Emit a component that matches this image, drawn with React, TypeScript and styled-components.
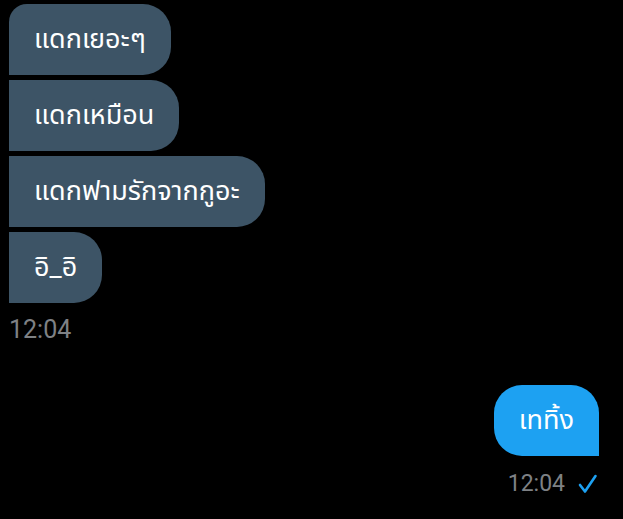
import React from "react";
import styled, { createGlobalStyle } from "styled-components";

const Global = createGlobalStyle`
  html, body { margin: 0; padding: 0; background: #000; }
  body { font-family: Roboto, "Noto Sans Thai", "Noto Sans", sans-serif; }
`;

const Page = styled.div`
  width: 623px;
  height: 519px;
  background: #000;
  box-sizing: border-box;
  padding: 4px 24px 0 9px;
  display: flex;
  flex-direction: column;
  overflow: hidden;
`;

const Group = styled.div<{ $side: "left" | "right" }>`
  display: flex;
  flex-direction: column;
  align-items: ${(p) => (p.$side === "left" ? "flex-start" : "flex-end")};
  gap: 5px;
`;

const Bubble = styled.div<{ $tl?: number; $tr?: number; $br?: number; $bl?: number; $mine?: boolean }>`
  height: 71px;
  box-sizing: border-box;
  display: flex;
  align-items: center;
  padding: 0 25px;
  font-size: 27px;
  color: #fff;
  background: ${(p) => (p.$mine ? "#1da1f2" : "#3d5466")};
  border-radius: ${(p) => `${p.$tl ?? 0}px ${p.$tr ?? 28}px ${p.$br ?? 28}px ${p.$bl ?? 0}px`};
  white-space: nowrap;
`;

const Meta = styled.div<{ $side: "left" | "right" }>`
  display: flex;
  align-items: center;
  gap: 11px;
  align-self: ${(p) => (p.$side === "left" ? "flex-start" : "flex-end")};
  margin-top: ${(p) => (p.$side === "left" ? "13px" : "14px")};
  margin-right: ${(p) => (p.$side === "left" ? "0" : "1px")};
  font-family: Roboto, sans-serif;
  font-size: ${(p) => (p.$side === "left" ? "25px" : "23px")};
  line-height: 28px;
  color: #7e8185;
`;

const Spacer = styled.div`
  height: 41px;
`;

const Check = () => (
  <svg width="22" height="22" viewBox="0 0 22 22">
    <polyline points="4,12 9,18.5 19.5,3" fill="none" stroke="#1da1f2" strokeWidth="2.6" strokeLinecap="round" strokeLinejoin="round" />
  </svg>
);

export default function App() {
  return (
    <>
      <Global />
      <Page>
        <Group $side="left">
          <Bubble $tl={18}>แดกเยอะๆ</Bubble>
          <Bubble>แดกเหมือน</Bubble>
          <Bubble>แดกฟามรักจากกูอะ</Bubble>
          <Bubble>อิ_อิ</Bubble>
        </Group>
        <Meta $side="left">12:04</Meta>
        <Spacer />
        <Group $side="right">
          <Bubble $mine $tl={28} $tr={28} $br={0} $bl={28}>เททิ้ง</Bubble>
        </Group>
        <Meta $side="right">
          <span>12:04</span>
          <Check />
        </Meta>
      </Page>
    </>
  );
}
